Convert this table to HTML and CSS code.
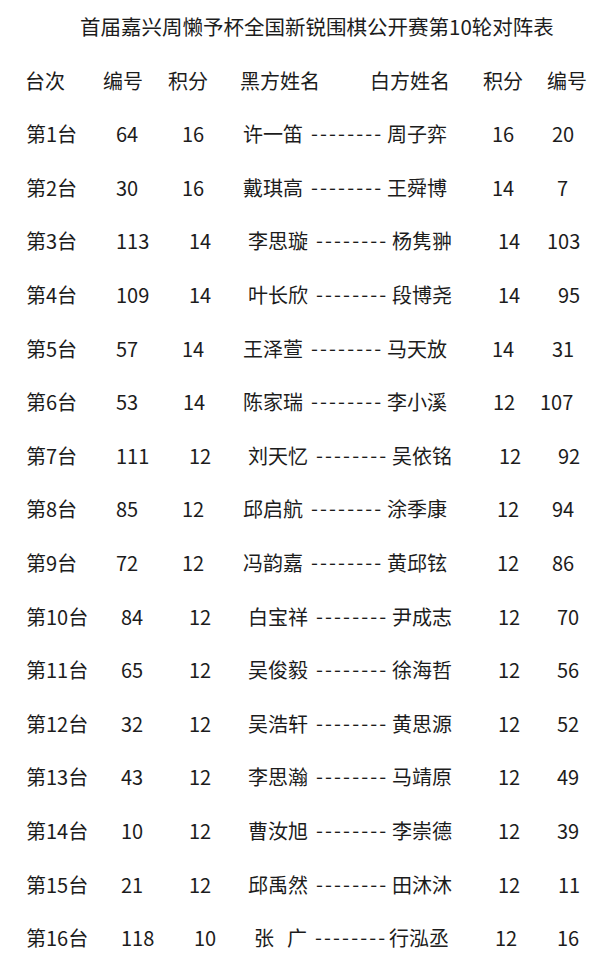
FILE: index.html
```html
<!DOCTYPE html>
<html lang="zh-CN">
<head>
<meta charset="utf-8">
<title>首届嘉兴周懒予杯全国新锐围棋公开赛第10轮对阵表</title>
<link rel="stylesheet" href="styles.css">
</head>
<body>
<div class="sheet">
  <h1 class="title">首届嘉兴周懒予杯全国新锐围棋公开赛第10轮对阵表</h1>
  <div class="head">
    <span>台次</span><span>编号</span><span>积分</span><span>黑方姓名</span><span>白方姓名</span><span>积分</span><span>编号</span>
  </div>

  <div class="row"><span>第1台</span><span>64</span><span>16</span><span class="names"><span class="bn">许一笛</span><span class="dash">--------</span><span>周子弈</span></span><span>16</span><span class="n12">20</span></div>
  <div class="row"><span>第2台</span><span>30</span><span>16</span><span class="names"><span class="bn">戴琪高</span><span class="dash">--------</span><span>王舜博</span></span><span>14</span><span class="n17">7</span></div>
  <div class="row"><span>第3台</span><span>113</span><span class="n7">14</span><span class="names n5"><span class="bn">李思璇</span><span class="dash">--------</span><span>杨隽翀</span></span><span class="n6">14</span><span class="n7">103</span></div>
  <div class="row"><span>第4台</span><span>109</span><span class="n7">14</span><span class="names n5"><span class="bn">叶长欣</span><span class="dash">--------</span><span>段博尧</span></span><span class="n6">14</span><span class="n18">95</span></div>
  <div class="row"><span>第5台</span><span>57</span><span>14</span><span class="names"><span class="bn">王泽萱</span><span class="dash">--------</span><span>马天放</span></span><span>14</span><span class="n12">31</span></div>
  <div class="row"><span>第6台</span><span>53</span><span class="n1">14</span><span class="names"><span class="bn">陈家瑞</span><span class="dash">--------</span><span>李小溪</span></span><span class="n1">12</span><span>107</span></div>
  <div class="row"><span>第7台</span><span>111</span><span class="n7">12</span><span class="names n5"><span class="bn">刘天忆</span><span class="dash">--------</span><span>吴依铭</span></span><span class="n7">12</span><span class="n18">92</span></div>
  <div class="row"><span>第8台</span><span>85</span><span>12</span><span class="names"><span class="bn">邱启航</span><span class="dash">--------</span><span>涂季康</span></span><span class="n5">12</span><span class="n12">94</span></div>
  <div class="row"><span>第9台</span><span>72</span><span>12</span><span class="names"><span class="bn">冯韵嘉</span><span class="dash">--------</span><span>黄邱铉</span></span><span class="n5">12</span><span class="n12">86</span></div>
  <div class="row"><span>第10台</span><span class="n5">84</span><span class="n7">12</span><span class="names n5"><span class="bn">白宝祥</span><span class="dash">--------</span><span>尹成志</span></span><span class="n6">12</span><span class="n17">70</span></div>
  <div class="row"><span>第11台</span><span class="n5">65</span><span class="n7">12</span><span class="names n5"><span class="bn">吴俊毅</span><span class="dash">--------</span><span>徐海哲</span></span><span class="n6">12</span><span class="n17">56</span></div>
  <div class="row"><span>第12台</span><span class="n5">32</span><span class="n7">12</span><span class="names n5"><span class="bn">吴浩轩</span><span class="dash">--------</span><span>黄思源</span></span><span class="n6">12</span><span class="n17">52</span></div>
  <div class="row"><span>第13台</span><span class="n5">43</span><span class="n7">12</span><span class="names n5"><span class="bn">李思瀚</span><span class="dash">--------</span><span>马靖原</span></span><span class="n6">12</span><span class="n17">49</span></div>
  <div class="row"><span>第14台</span><span class="n5">10</span><span class="n7">12</span><span class="names n5"><span class="bn">曹汝旭</span><span class="dash">--------</span><span>李崇德</span></span><span class="n6">12</span><span class="n17">39</span></div>
  <div class="row"><span>第15台</span><span class="n5">21</span><span class="n7">12</span><span class="names n5"><span class="bn">邱禹然</span><span class="dash">--------</span><span>田沐沐</span></span><span class="n6">12</span><span class="n18">11</span></div>
  <div class="row"><span>第16台</span><span class="n5">118</span><span class="n12">10</span><span class="names last"><span class="bn">张 广</span><span class="dash">--------</span><span>行泓丞</span></span><span class="n3">12</span><span class="n17">16</span></div>
</div>
</body>
</html>
```

FILE: styles.css
```css
html, body {
  margin: 0;
  padding: 0;
  background: #ffffff;
}

body {
  font-family: "Noto Sans CJK SC", "Noto Sans", sans-serif;
  color: #1c1c1c;
  font-size: 20px;
}

.sheet {
  width: 600px;
  height: 961px;
  overflow: hidden;
}

.title {
  margin: 0;
  padding-left: 80px;
  height: 53.6px;
  line-height: 53.6px;
  font-size: 20.5px;
  font-weight: normal;
  white-space: nowrap;
}

.head {
  display: grid;
  grid-template-columns: 78px 65px 72px 130px 113px 64px auto;
  padding-left: 25px;
  height: 53.6px;
  line-height: 53.6px;
  white-space: nowrap;
}

.row {
  display: grid;
  grid-template-columns: 90px 66px 61px 249px 48px auto;
  padding-left: 26px;
  height: 53.6px;
  line-height: 53.6px;
  white-space: nowrap;
}

.names {
  display: flex;
}

.bn {
  width: 68px;
  flex: none;
}

.dash {
  width: 76px;
  flex: none;
  letter-spacing: 2.1px;
  position: relative;
  top: -1px;
}

.last {
  padding-left: 11px;
}

.last .bn {
  width: 61px;
  word-spacing: 8.5px;
}

.last .dash {
  width: 74px;
}

.n1 { padding-left: 1px; }
.n3 { padding-left: 3px; }
.n5 { padding-left: 5px; }
.n6 { padding-left: 6px; }
.n7 { padding-left: 7px; }
.n12 { padding-left: 12px; }
.n17 { padding-left: 17px; }
.n18 { padding-left: 18px; }
```
